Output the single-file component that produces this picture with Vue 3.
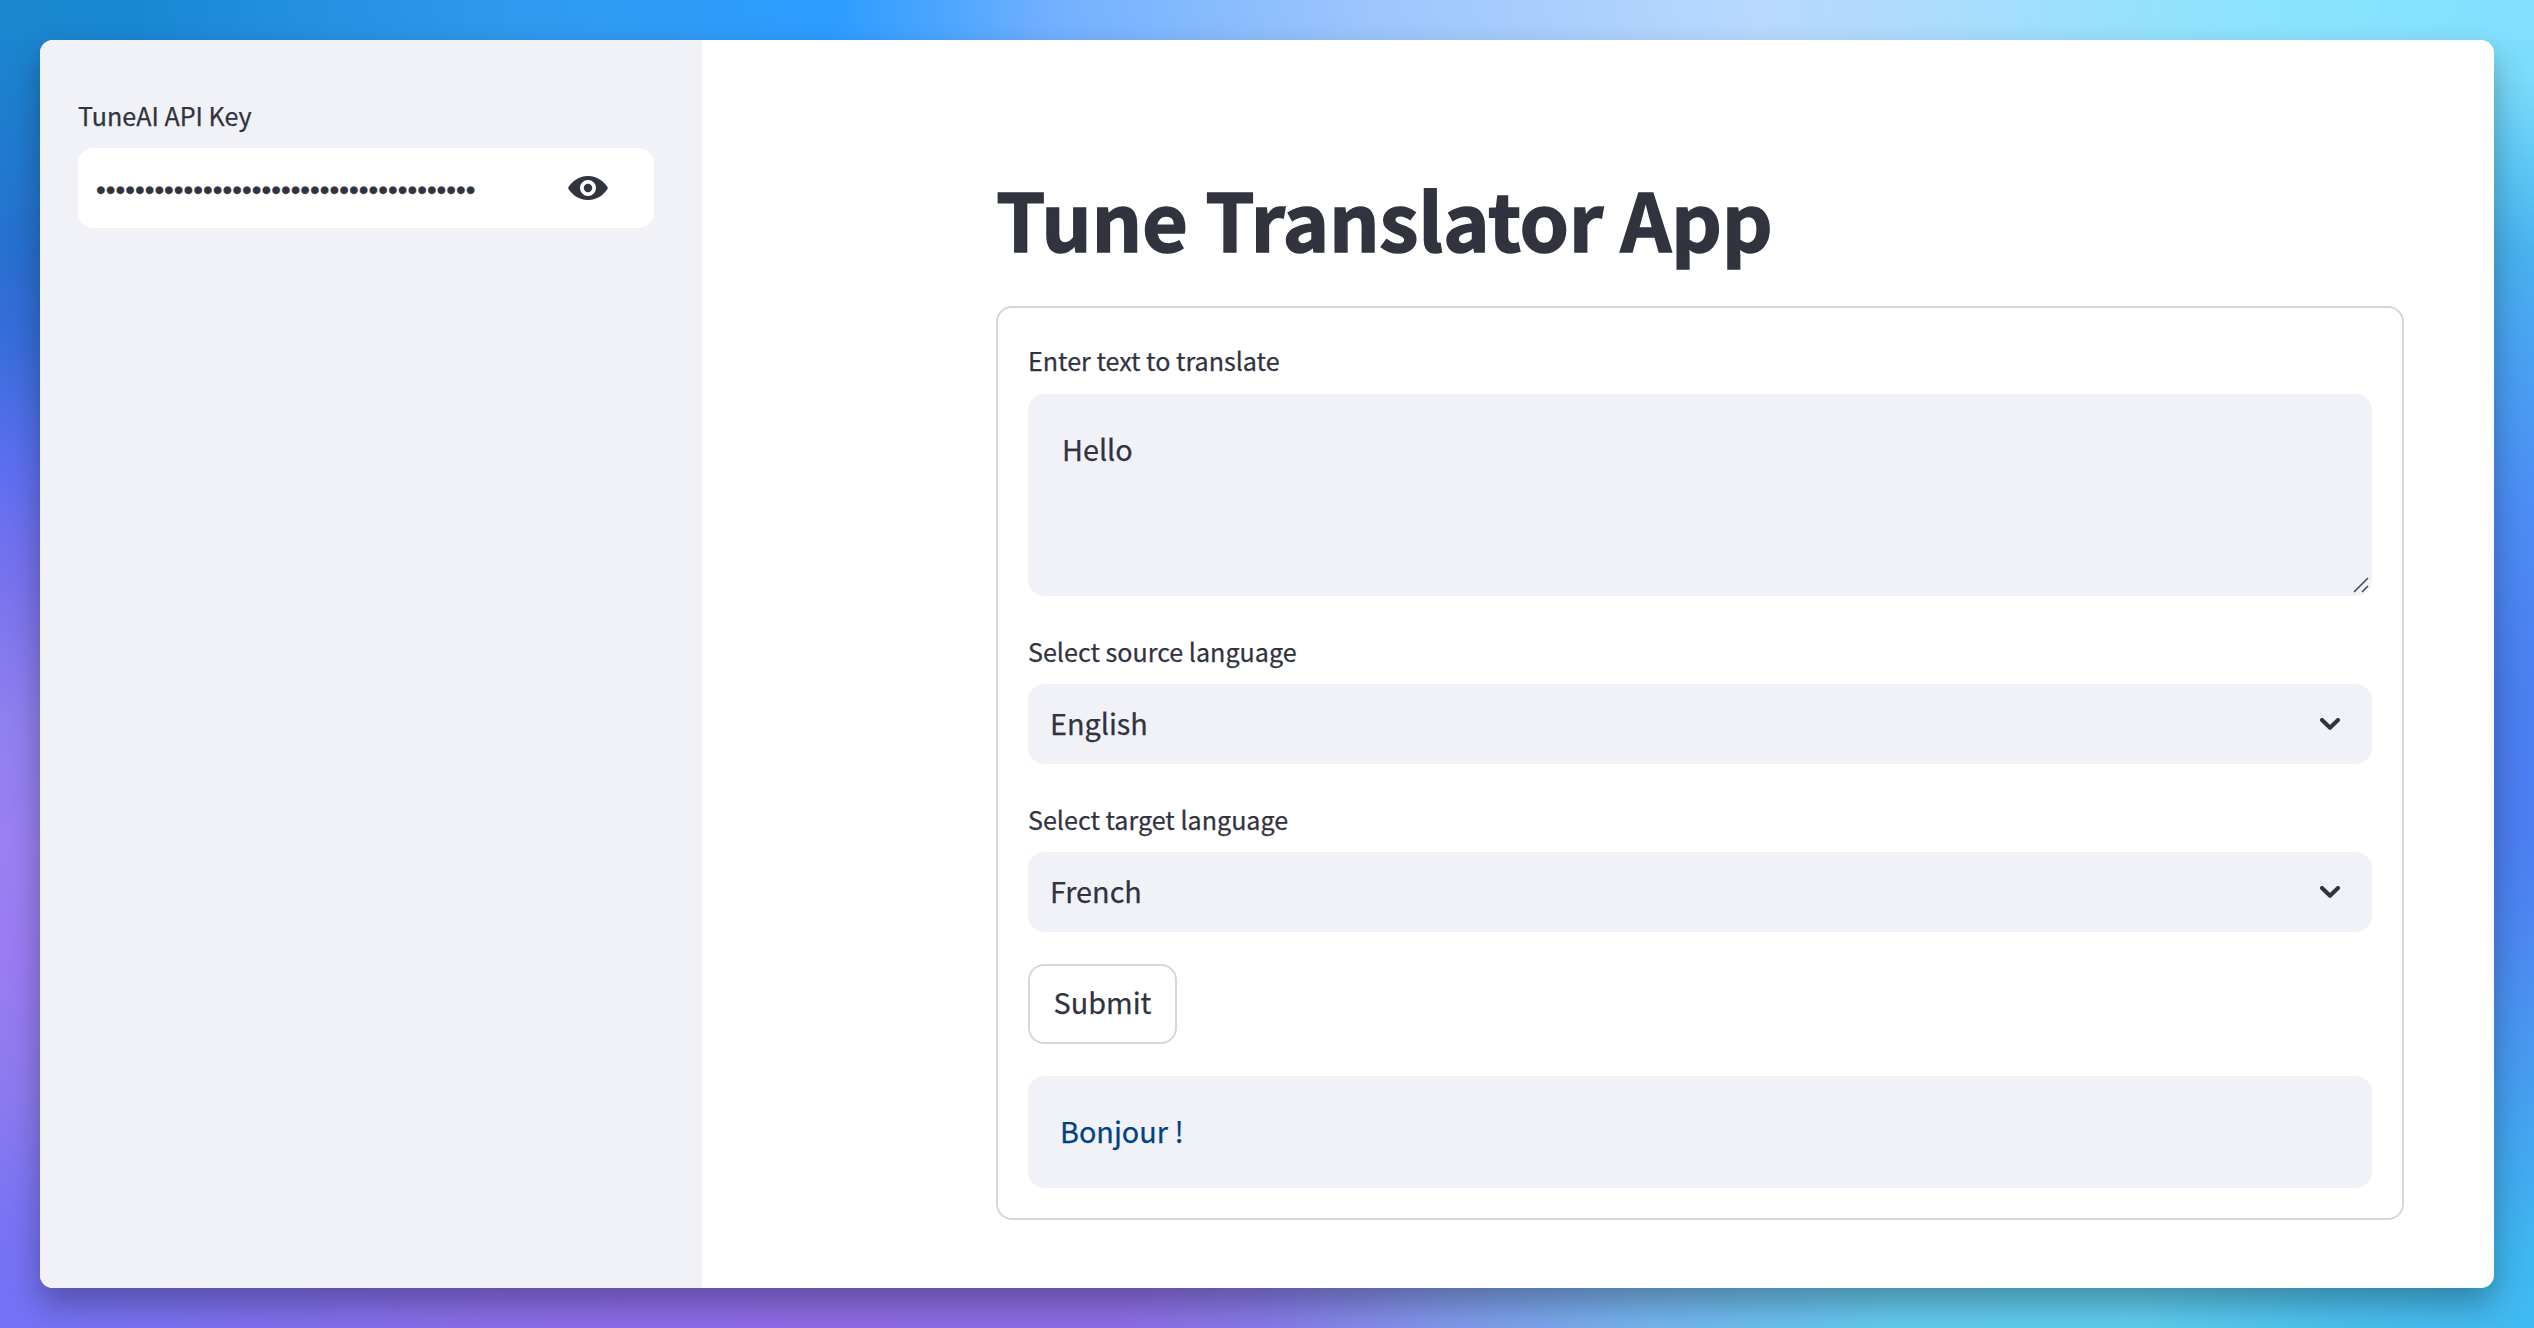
<script setup>
import { ref } from 'vue'

const keyLength = 39
const source = ref('Hello')
const selects = [
  { label: 'Select source language', value: 'English' },
  { label: 'Select target language', value: 'French' },
]
</script>

<template>
  <div class="desktop">
    <div class="window">
      <aside class="sidebar">
        <label class="label">TuneAI API Key</label>
        <div class="key-field">
          <span class="mask">{{ '•'.repeat(keyLength) }}</span>
          <svg class="eye" viewBox="0 0 40 24" aria-hidden="true">
            <path
              fill-rule="evenodd"
              d="M20 0C30 0 36 6 39.5 11Q40 12 39.5 13C36 18 30 24 20 24S4 18 .5 13Q0 12 .5 11C4 6 10 0 20 0ZM20 4A8 8 0 1 0 20 20A8 8 0 1 0 20 4Z"
            />
            <circle cx="20" cy="12" r="4.2" />
          </svg>
        </div>
      </aside>
      <main class="main">
        <h1 class="title">Tune Translator App</h1>
        <section class="form">
          <label class="label">Enter text to translate</label>
          <div class="textarea">
            {{ source }}
            <svg class="grip" viewBox="0 0 16 16" aria-hidden="true">
              <path d="M1 15L15 1M9 15L15 9" />
            </svg>
          </div>
          <div v-for="s in selects" :key="s.label" class="group">
            <label class="label">{{ s.label }}</label>
            <div class="select">
              <span>{{ s.value }}</span>
              <svg class="chevron" viewBox="0 0 20 12" aria-hidden="true">
                <path d="M2 2L10 9.8L18 2" />
              </svg>
            </div>
          </div>
          <button class="submit">Submit</button>
          <div class="result">Bonjour !</div>
        </section>
      </main>
    </div>
  </div>
</template>

<style>
body {
  margin: 0;
}
</style>

<style scoped>
.desktop {
  box-sizing: border-box;
  width: 2534px;
  height: 1328px;
  padding: 40px;
  overflow: hidden;
  font-family: "Noto Sans CJK SC", "Noto Sans", sans-serif;
  -webkit-text-stroke: 0.25px currentColor;
  color: #31333f;
  background:
    linear-gradient(90deg, #1b86cf 0, #1887d3 5%, #2691e3 13%, #2f9aef 21%, #2e9dff 33%, #4aa6ff 37%, #72b0ff 41.5%, #9cc6fc 54%, #b9d9ff 69.5%, #acdcfe 76.5%, #98e1fd 83%, #8ae4ff 90.5%, #82dffe 100%) 0 0 / 100% 40px no-repeat,
    linear-gradient(90deg, #7472f6 0, #7673f4 3%, #7f70ee 10%, #8a6de8 20%, #8e6ce8 30%, #8e6de6 44%, #867ae8 50%, #8098ea 57%, #74b4ee 65%, #62cbee 75%, #60cdee 84%, #4cc0ee 92%, #40b9f1 100%) 0 100% / 100% 40px no-repeat,
    linear-gradient(180deg, #1b86cf 0, #1b84d0 51px, #2770d0 254px, #376ddb 339px, #5f6ff0 474px, #7b73ee 593px, #9080f0 720px, #9a80f3 847px, #9a7cf3 957px, #8c7af0 1100px, #7873f4 1228px, #7472f6 1328px) 0 0 / 50% 100% no-repeat,
    linear-gradient(180deg, #82dffe 0, #7cdcfb 75px, #5cc7f5 170px, #48b2ee 254px, #4aa0f3 364px, #4c8df5 508px, #4b80f1 678px, #4c7ef1 830px, #4c88f2 930px, #489af1 1058px, #42aaf1 1169px, #3fb7f0 1253px, #40b9f1 1328px) 100% 0 / 50% 100% no-repeat;
}

.window {
  display: flex;
  height: 1248px;
  border-radius: 13px;
  background: #fff;
  box-shadow: 0 16px 32px rgba(0, 0, 0, 0.3);
}

.sidebar {
  box-sizing: border-box;
  width: 662px;
  padding: 54px 48px 0 38px;
  border-radius: 13px 0 0 13px;
  background: #f0f2f7;
}

.label {
  display: block;
  height: 42px;
  margin-bottom: 12px;
  font-size: 25.1px;
  line-height: 42px;
}

.form > .label {
  line-height: 41px;
}

.key-field {
  display: flex;
  align-items: center;
  justify-content: space-between;
  box-sizing: border-box;
  height: 80px;
  padding: 0 46px 0 18px;
  border-radius: 16px;
  background: #fff;
}

.mask {
  padding-top: 3px;
  font-family: "Liberation Sans", Arial, sans-serif;
  font-size: 27.8px;
  line-height: 77px;
}

.eye {
  width: 40px;
  height: 24px;
  fill: #31333f;
}

.main {
  box-sizing: border-box;
  width: 1792px;
  padding: 125px 90px 0 294px;
}

.title {
  height: 106px;
  margin: 0 0 35px;
  font-size: 79.2px;
  font-weight: 700;
  line-height: 106px;
  letter-spacing: -0.3px;
  white-space: nowrap;
  -webkit-text-stroke: 1.5px currentColor;
}

.form {
  box-sizing: border-box;
  height: 914px;
  padding: 32px 30px 30px;
  border: 2px solid #d6d6d9;
  border-radius: 16px;
}

.textarea {
  position: relative;
  box-sizing: border-box;
  height: 202px;
  margin-bottom: 34px;
  padding: 31px 34px;
  border-radius: 16px;
  background: #f0f2f7;
  font-size: 28.8px;
  line-height: 48px;
}

.grip {
  position: absolute;
  right: 3px;
  bottom: 3px;
  width: 16px;
  height: 16px;
  fill: none;
  stroke: #4b4c55;
  stroke-width: 1.6;
}

.group {
  margin-bottom: 34px;
}

.select {
  display: flex;
  align-items: center;
  justify-content: space-between;
  height: 80px;
  padding: 0 32px 0 22px;
  border-radius: 16px;
  background: #f0f2f7;
  font-size: 28.8px;
}

.select span {
  padding-bottom: 2px;
  line-height: 78px;
}

.chevron {
  width: 20px;
  height: 12px;
  fill: none;
  stroke: #31333f;
  stroke-width: 4;
  stroke-linecap: round;
  stroke-linejoin: round;
}

.submit {
  display: block;
  box-sizing: border-box;
  width: 149px;
  height: 80px;
  margin: -2px 0 32px;
  padding: 0 0 4px;
  border: 2px solid #d6d6d9;
  border-radius: 16px;
  background: #fff;
  color: inherit;
  font-family: inherit;
  font-size: 28.8px;
  line-height: 72px;
}

.result {
  height: 112px;
  padding: 0 32px;
  border-radius: 16px;
  background: #f0f2f7;
  color: #004280;
  font-size: 28.8px;
  line-height: 109px;
  -webkit-text-stroke: 0.25px #004280;
}
</style>
